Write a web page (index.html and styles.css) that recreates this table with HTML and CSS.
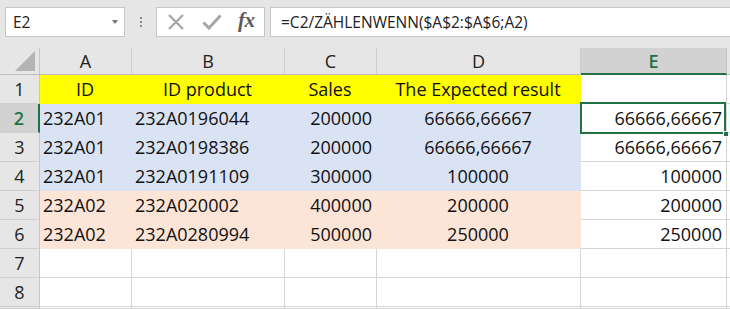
FILE: index.html
```html
<!DOCTYPE html>
<html>
<head>
<meta charset="utf-8">
<link rel="stylesheet" href="styles.css">
</head>
<body>
<div class="toolbar">
  <div class="namebox"><span class="name">E2</span><span class="caret"></span></div>
  <div class="dots"><i></i><i></i><i></i></div>
  <div class="iconbox">
    <svg class="ico" width="18" height="16" viewBox="0 0 18 16"><path d="M2 1 L16 15 M16 1 L2 15" stroke="#a6a6a6" stroke-width="2.2" fill="none"/></svg>
    <svg class="ico" width="20" height="16" viewBox="0 0 20 16"><path d="M1.5 8.5 L7 14 L18.5 1.5" stroke="#a6a6a6" stroke-width="3" fill="none"/></svg>
    <span class="fx">fx</span>
  </div>
  <div class="formula">=C2/ZÄHLENWENN($A$2:$A$6;A2)</div>
</div>
<div class="sheet">
  <div class="corner"><span class="tri"></span></div>
  <div class="ch">A</div>
  <div class="ch">B</div>
  <div class="ch">C</div>
  <div class="ch">D</div>
  <div class="ch ch-sel">E</div>
  <div class="ch ch-rest"></div>

  <div class="rh">1</div>
  <div class="c y ctr">ID</div>
  <div class="c y ctr">ID product</div>
  <div class="c y ctr">Sales</div>
  <div class="c y ctr">The Expected result</div>
  <div class="c"></div>
  <div class="c rest"></div>

  <div class="rh rh-sel">2</div>
  <div class="c b">232A01</div>
  <div class="c b">232A0196044</div>
  <div class="c b num">200000</div>
  <div class="c b ctr">66666,66667</div>
  <div class="c num sel">66666,66667<span class="handle"></span></div>
  <div class="c rest"></div>

  <div class="rh">3</div>
  <div class="c b">232A01</div>
  <div class="c b">232A0198386</div>
  <div class="c b num">200000</div>
  <div class="c b ctr">66666,66667</div>
  <div class="c num">66666,66667</div>
  <div class="c rest"></div>

  <div class="rh">4</div>
  <div class="c b">232A01</div>
  <div class="c b">232A0191109</div>
  <div class="c b num">300000</div>
  <div class="c b ctr">100000</div>
  <div class="c num">100000</div>
  <div class="c rest"></div>

  <div class="rh">5</div>
  <div class="c o">232A02</div>
  <div class="c o">232A020002</div>
  <div class="c o num">400000</div>
  <div class="c o ctr">200000</div>
  <div class="c num">200000</div>
  <div class="c rest"></div>

  <div class="rh">6</div>
  <div class="c o">232A02</div>
  <div class="c o">232A0280994</div>
  <div class="c o num">500000</div>
  <div class="c o ctr">250000</div>
  <div class="c num">250000</div>
  <div class="c rest"></div>

  <div class="rh">7</div>
  <div class="c"></div><div class="c"></div><div class="c"></div><div class="c"></div><div class="c"></div><div class="c rest"></div>

  <div class="rh">8</div>
  <div class="c"></div><div class="c"></div><div class="c"></div><div class="c"></div><div class="c"></div><div class="c rest"></div>

  <div class="rh"></div>
  <div class="c"></div><div class="c"></div><div class="c"></div><div class="c"></div><div class="c"></div><div class="c rest"></div>
</div>
</body>
</html>
```
FILE: styles.css
```css
* { box-sizing: border-box; }
html, body { margin: 0; padding: 0; }
body {
  width: 730px;
  height: 309px;
  overflow: hidden;
  background: #e6e6e6;
  font-family: "Open Sans", "Liberation Sans", sans-serif;
  color: #1a1a1a;
}
.toolbar {
  height: 48px;
  display: flex;
  align-items: flex-start;
  padding: 7px 0 0 5px;
  overflow: hidden;
  white-space: nowrap;
}
.namebox {
  width: 120px;
  height: 30px;
  flex: none;
  background: #fff;
  border: 1px solid #c6c6c6;
  display: flex;
  align-items: center;
  justify-content: space-between;
  padding: 0 6px 0 7px;
}
.name { font-size: 15.5px; color: #222; }
.caret {
  width: 0; height: 0;
  border-left: 3.5px solid transparent;
  border-right: 3.5px solid transparent;
  border-top: 4px solid #777;
  margin-top: -1px;
}
.dots {
  width: 31px;
  height: 30px;
  flex: none;
  display: flex;
  flex-direction: column;
  align-items: center;
  justify-content: center;
  gap: 2px;
}
.dots i { display: block; width: 2px; height: 2px; background: #8a8a8a; }
.iconbox {
  width: 109px;
  height: 30px;
  flex: none;
  background: #fff;
  border: 1px solid #c6c6c6;
  display: flex;
  align-items: center;
  padding-left: 10px;
  gap: 17px;
}
.ico { display: block; }
.fx {
  font-family: "Liberation Serif", "DejaVu Serif", serif;
  font-style: italic;
  font-weight: bold;
  font-size: 21px;
  color: #5a5a5a;
  margin-left: -1px;
  letter-spacing: -0.5px;
  line-height: 1;
  margin-top: -3px;
}
.formula {
  flex: none;
  width: 480px;
  height: 30px;
  margin-left: 5px;
  background: #fff;
  border: 1px solid #c6c6c6;
  font-size: 15.5px;
  line-height: 28px;
  padding-left: 10px;
  color: #222;
}
.sheet {
  display: grid;
  grid-template-columns: 40px 92px 153px 92px 204px 146px 3px;
  grid-template-rows: 27px repeat(8, 29px) 2px;
  background: #fff;
  font-size: 18px;
  overflow: hidden;
}
.corner {
  background: #e6e6e6;
  border-right: 1px solid #c6c6c6;
  border-bottom: 1px solid #bdbdbd;
  position: relative;
}
.tri {
  position: absolute;
  right: 4px;
  bottom: 3px;
  width: 0; height: 0;
  border-left: 20px solid transparent;
  border-bottom: 20px solid #b4b4b4;
}
.ch {
  background: #e6e6e6;
  border-right: 1px solid #cfcfcf;
  border-bottom: 1px solid #bdbdbd;
  text-align: center;
  font-size: 18px;
  line-height: 27px;
  color: #222;
}
.ch-sel {
  background: #d2d2d2;
  color: #217346;
  font-weight: 600;
  border-right-color: #c0c0c0;
  border-bottom: 2px solid #217346;
  line-height: 26px;
}
.ch-rest { border-right: none; background: #e6e6e6; }
.rh {
  background: #e6e6e6;
  border-right: 1px solid #c6c6c6;
  border-bottom: 1px solid #d0d0d0;
  text-align: center;
  line-height: 29px;
  color: #222;
}
.rh-sel {
  background: #d2d2d2;
  color: #217346;
  font-weight: 600;
  border-right: 2px solid #217346;
}
.c {
  border-right: 1px solid #d4d4d4;
  border-bottom: 1px solid #d4d4d4;
  line-height: 29px;
  padding: 0 4px 0 3px;
  white-space: nowrap;
  color: #111;
}
.rest { border-right: none; padding: 0; }
.ctr { text-align: center; }
.num { text-align: right; }
.y { background: #ffff00; border-color: #ffff00; }
.b { background: #dae3f3; border-color: #dae3f3; }
.o { background: #fce4d6; border-color: #fce4d6; }
.sel { position: relative; }
.sel::after {
  content: "";
  position: absolute;
  left: -1px;
  top: -2px;
  right: 0;
  bottom: -2px;
  border: 2px solid #217346;
}
.handle {
  position: absolute;
  right: -3px;
  bottom: -5px;
  width: 6px;
  height: 6px;
  background: #217346;
  border: 1px solid #fff;
  z-index: 2;
}
```
